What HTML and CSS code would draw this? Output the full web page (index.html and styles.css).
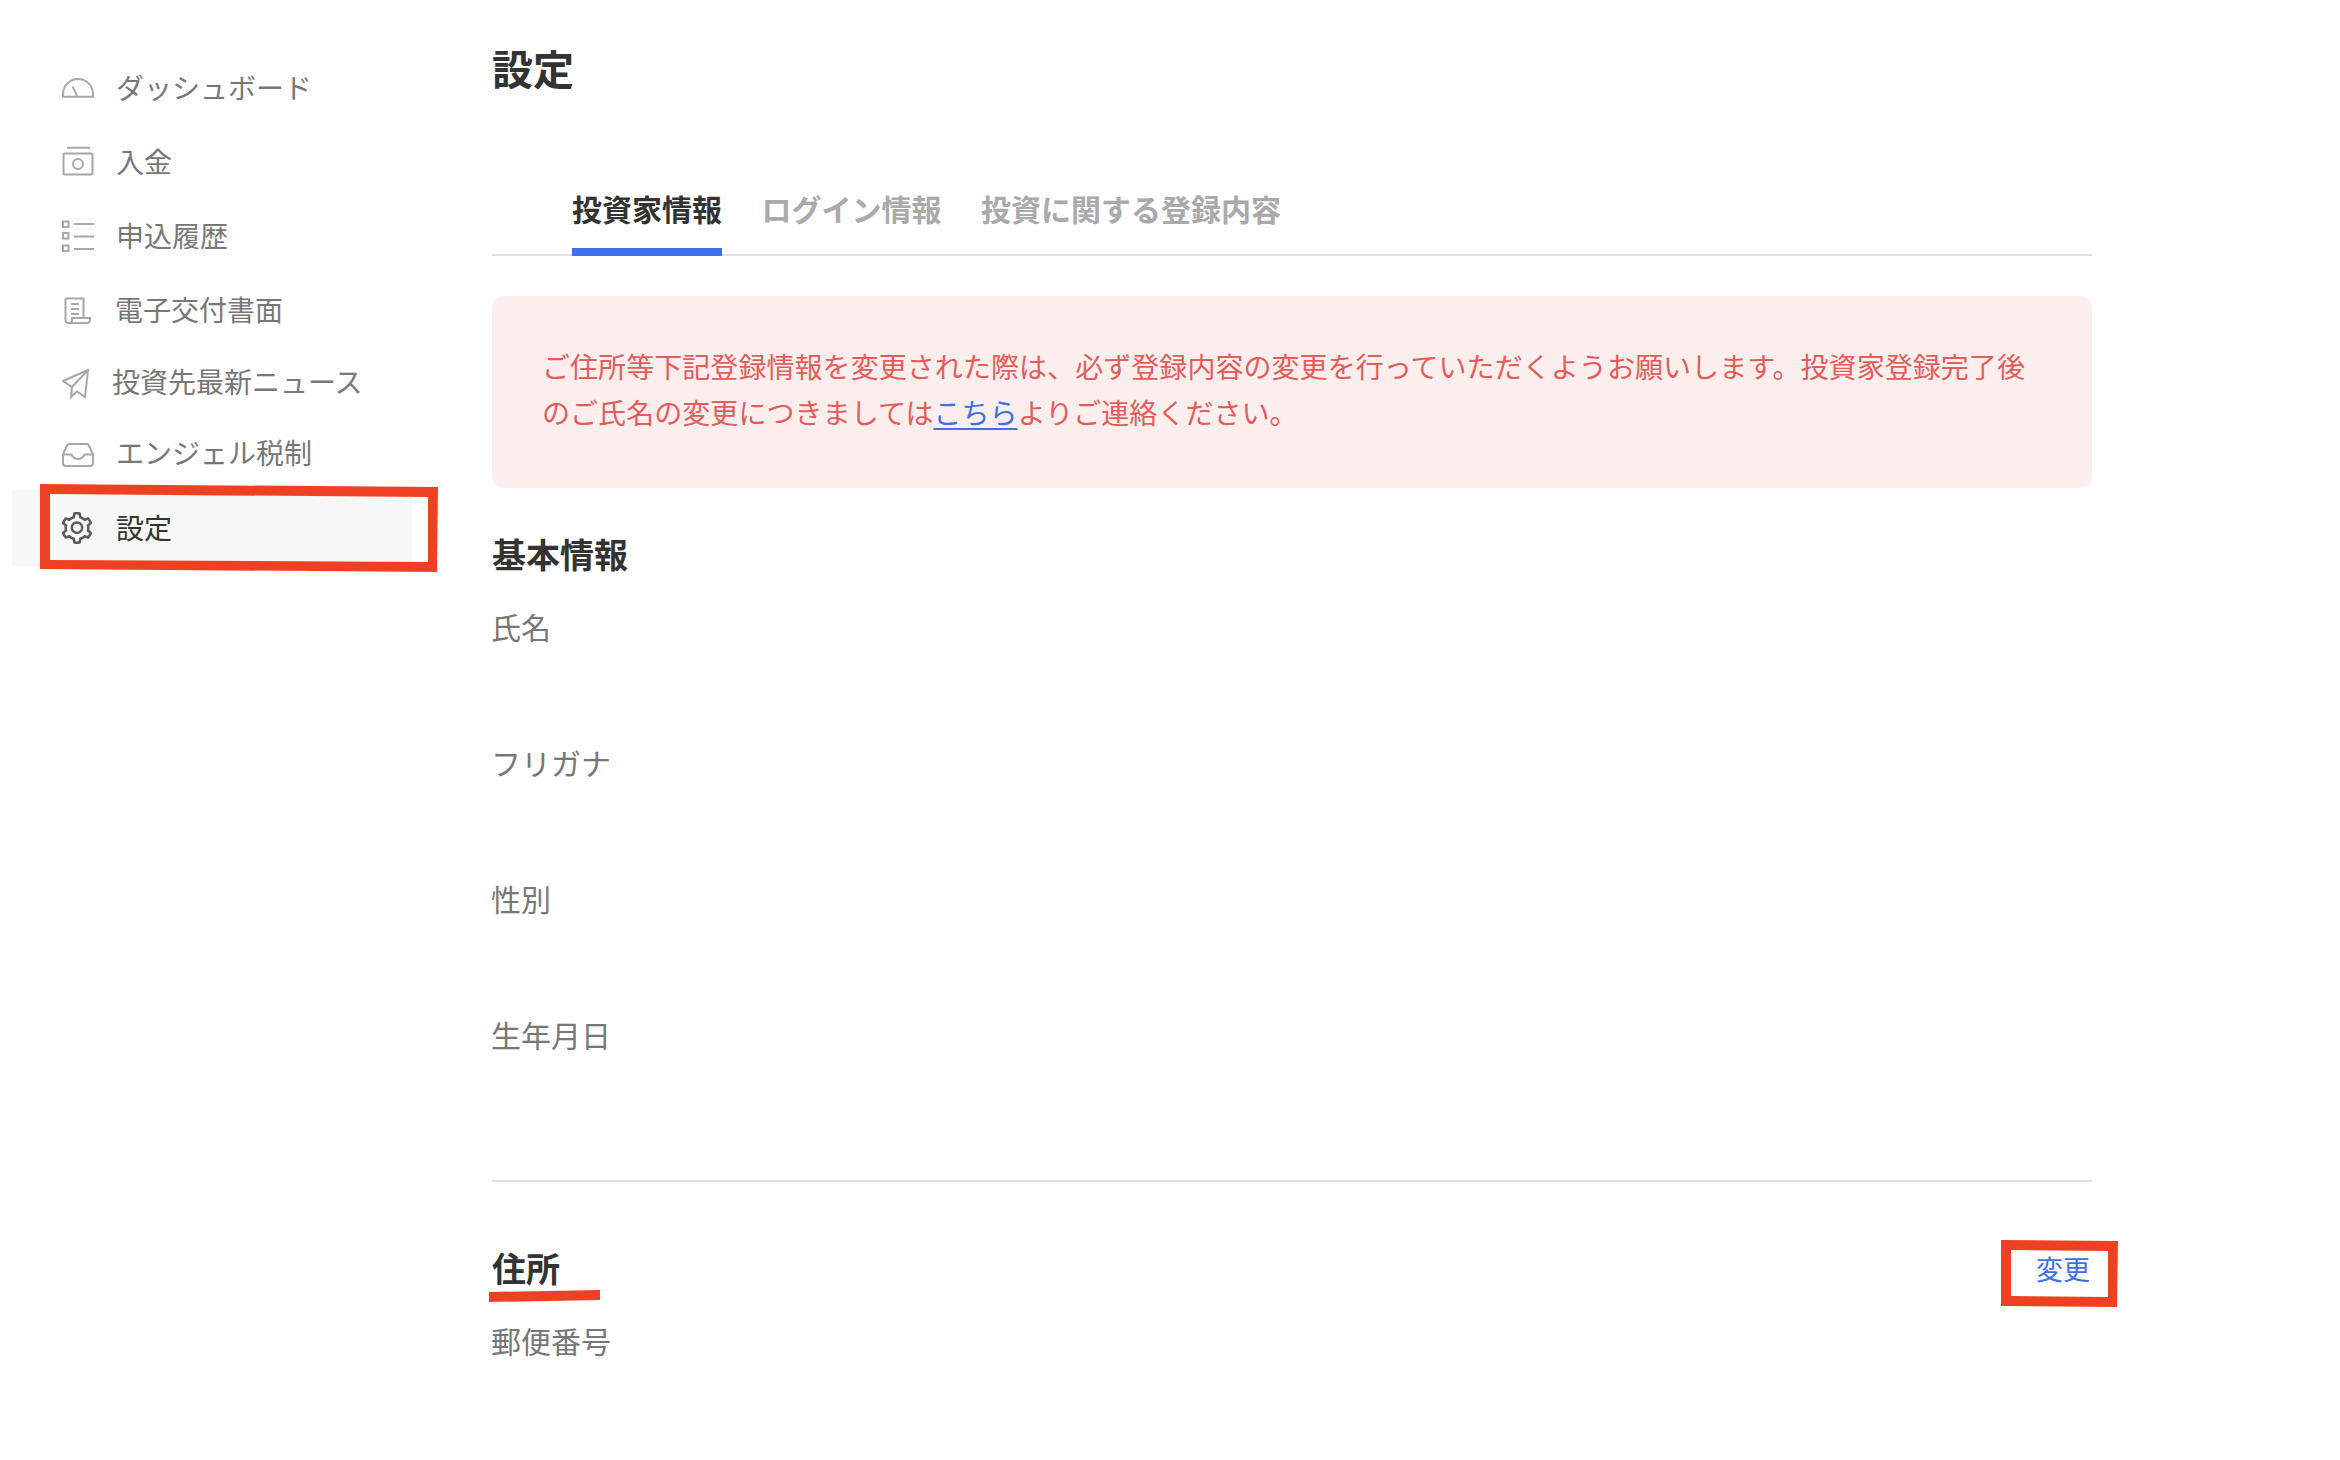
FILE: index.html
```html
<!DOCTYPE html>
<html lang="ja">
<head>
<meta charset="utf-8">
<title>設定</title>
<link rel="stylesheet" href="styles.css">
</head>
<body>
<div class="page">
  <nav class="side">
    <a class="nav-item">
      <svg class="icon" viewBox="0 0 32 32"><path d="M1 24.7v-2.2C1 13.5 7.5 7 16 7s15 6.500 15 15.500v2.200zM10.700 14.700 15.300 24.500"/></svg>
      <span>ダッシュボード</span>
    </a>
    <a class="nav-item">
      <svg class="icon" viewBox="0 0 32 32"><path d="M5 1.700H28M2.500 7.500H29.500a1 1 0 0 1 1 1V27.500a1 1 0 0 1-1 1H2.500a1 1 0 0 1-1-1V8.500a1 1 0 0 1 1-1z"/><circle cx="16" cy="18" r="5"/></svg>
      <span>入金</span>
    </a>
    <a class="nav-item">
      <svg class="icon" viewBox="0 0 32 32"><path d="M1 1.500H6.500V7H1zM1 13H6.500V18.500H1zM1 25.500H6.500V31H1zM12 4H32M12 16.500H32M12 29H32"/></svg>
      <span>申込履歴</span>
    </a>
    <a class="nav-item nav-doc">
      <svg class="icon" viewBox="0 0 32 32"><path d="M3.500 4.500H21.500V24M3.500 4.500V26a3 3 0 0 0 3 3H25a3 3 0 0 0 3-3V24H10V26a3 3 0 0 1-3 3M9 10H17M9 15H17M9 20H17"/></svg>
      <span>電子交付書面</span>
    </a>
    <a class="nav-item nav-short nav-send">
      <svg class="icon" viewBox="0 0 32 32"><path d="M26 3 1 14 10 20 9 30 15 24.500 23 30zM26 3 10 20"/></svg>
      <span>投資先最新ニュース</span>
    </a>
    <a class="nav-item nav-short">
      <svg class="icon" viewBox="0 0 32 32"><path d="M1 16.500 5 7.500A2.500 2.500 0 0 1 7 6H25a2.500 2.500 0 0 1 2 1.500L31 16.500V25a3 3 0 0 1-3 3H4a3 3 0 0 1-3-3zM1 16.500H9.500C11 20 13 21 16 21S21 20 22.500 16.500H31"/></svg>
      <span>エンジェル税制</span>
    </a>
    <a class="nav-item nav-active">
      <svg class="icon icon-gear" viewBox="64 64 896 896"><path d="M924.8 625.700l-65.500-56c3.100-19 4.700-38.400 4.700-57.800s-1.600-38.800-4.700-57.800l65.500-56a32.030 32.030 0 0 0 9.300-35.200l-.9-2.600a443.740 443.740 0 0 0-79.700-137.900l-1.800-2.100a32.120 32.120 0 0 0-35.100-9.500l-81.300 28.900c-30-24.600-63.500-44-99.700-57.600l-15.700-85a32.050 32.050 0 0 0-25.800-25.700l-2.700-.5c-52.100-9.400-106.900-9.400-159 0l-2.700.5a32.050 32.050 0 0 0-25.800 25.700l-15.800 85.400a351.860 351.860 0 0 0-99 57.400l-81.900-29.100a32 32 0 0 0-35.100 9.500l-1.800 2.100a446.020 446.020 0 0 0-79.700 137.900l-.9 2.600c-4.500 12.500-.8 26.500 9.300 35.200l66.300 56.600c-3.100 18.800-4.600 38-4.600 57.100 0 19.200 1.500 38.400 4.600 57.100L99 625.500a32.030 32.030 0 0 0-9.300 35.200l.9 2.600c18.100 50.400 44.900 96.900 79.700 137.900l1.800 2.100a32.120 32.120 0 0 0 35.100 9.500l81.900-29.100c29.800 24.500 63.100 43.900 99 57.400l15.800 85.400a32.050 32.050 0 0 0 25.800 25.700l2.700.5a449.400 449.400 0 0 0 159 0l2.700-.5a32.050 32.050 0 0 0 25.800-25.700l15.700-85a350 350 0 0 0 99.700-57.600l81.300 28.900a32 32 0 0 0 35.100-9.500l1.800-2.100c34.800-41.100 61.600-87.500 79.700-137.900l.9-2.600c4.500-12.300.8-26.300-9.300-35zM788.300 465.900c2.500 15.100 3.800 30.600 3.800 46.100s-1.300 31-3.800 46.100l-6.600 40.100 74.700 63.900a370.030 370.030 0 0 1-42.600 73.600L721 702.800l-31.400 25.800c-23.900 19.600-50.500 35-79.300 45.800l-38.100 14.300-17.900 97a377.500 377.500 0 0 1-85 0l-17.900-97.200-37.800-14.500c-28.500-10.800-55-26.200-78.700-45.700l-31.400-25.900-93.400 33.200c-17-22.900-31.200-47.600-42.600-73.600l75.500-64.500-6.500-40c-2.400-14.900-3.700-30.300-3.700-45.500 0-15.300 1.200-30.600 3.700-45.500l6.500-40-75.500-64.500c11.300-26.100 25.600-50.700 42.600-73.600l93.400 33.200 31.400-25.900c23.700-19.500 50.200-34.900 78.700-45.700l37.900-14.300 17.900-97.200c28.100-3.200 56.800-3.200 85 0l17.900 97 38.100 14.300c28.700 10.800 55.400 26.200 79.300 45.800l31.400 25.800 92.800-32.900c17 22.900 31.200 47.600 42.600 73.600L781.800 426l6.500 39.900zM512 326c-97.200 0-176 78.800-176 176s78.800 176 176 176 176-78.800 176-176-78.800-176-176-176zm79.200 255.200A111.600 111.600 0 0 1 512 614c-29.900 0-58-11.700-79.200-32.800A111.600 111.600 0 0 1 400 502c0-29.900 11.700-58 32.800-79.200C454 401.600 482.100 390 512 390c29.900 0 58 11.600 79.200 32.800A111.600 111.600 0 0 1 624 502c0 29.900-11.700 58-32.800 79.200z"/></svg>
      <span>設定</span>
    </a>
  </nav>

  <main class="main">
    <h1 class="title">設定</h1>
    <div class="tabs">
      <a class="tab tab-active">投資家情報</a>
      <a class="tab">ログイン情報</a>
      <a class="tab">投資に関する登録内容</a>
    </div>
    <p class="alert">ご住所等下記登録情報を変更された際は、必ず登録内容の変更を行っていただくようお願いします。投資家登録完了後のご氏名の変更につきましては<a class="alert-link">こちら</a>よりご連絡ください。</p>

    <section class="section section-basic">
      <div class="section-head"><h2 class="section-title">基本情報</h2></div>
      <div class="field">氏名</div>
      <div class="field">フリガナ</div>
      <div class="field">性別</div>
      <div class="field">生年月日</div>
    </section>

    <section class="section section-address">
      <div class="section-head">
        <h2 class="section-title">住所</h2>
        <a class="change">変更</a>
      </div>
      <div class="field">郵便番号</div>
    </section>
  </main>
</div>

<svg class="marks" viewBox="0 0 2340 1460">
  <path fill-rule="evenodd" d="M40 484 438 487 437 572 40 569ZM50 494 428 497 428 562 50 560Z"/>
  <path d="M489 1292 600 1290 600 1300 489 1302Z"/>
  <path fill-rule="evenodd" d="M2001 1240 2118 1241 2117 1307 2001 1306ZM2011 1250 2108 1251 2108 1297 2011 1296Z"/>
</svg>
</body>
</html>
```
FILE: styles.css
```css
* { box-sizing: border-box; }

html, body {
  margin: 0;
  padding: 0;
  background: #fff;
}

body {
  position: relative;
  width: 2340px;
  height: 1460px;
  overflow: hidden;
  font-family: "Noto Sans CJK JP", "Noto Sans", sans-serif;
  color: #333;
}

.page {
  display: flex;
  align-items: flex-start;
}

/* Sidebar */
.side {
  flex: none;
  width: 492px;
  padding: 51px 0 0 12px;
  display: flex;
  flex-direction: column;
}

.nav-item {
  width: 400px;
  height: 74px;
  padding-left: 50px;
  display: flex;
  align-items: center;
  gap: 22px;
  font-size: 28px;
  color: #777;
  white-space: nowrap;
}

.nav-item span { margin-bottom: 3px; }

.nav-short { height: 71px; }
.nav-doc { gap: 21px; }
.nav-send { gap: 18px; }

.nav-active {
  height: 76px;
  margin-top: 1px;
  background: #f7f7f7;
  color: #333;
}

.icon {
  flex: none;
  width: 32px;
  height: 32px;
  fill: none;
  stroke: #a8a8a8;
  stroke-width: 2;
}

.icon-gear {
  margin-left: -1px;
  margin-right: 1px;
  fill: #5c5c5c;
  stroke: none;
}

/* Main column */
.main {
  flex: none;
  width: 1600px;
  padding-top: 37px;
}

.title {
  margin: 0;
  font-size: 41px;
  line-height: 60px;
  font-weight: 700;
  color: #333;
}

.tabs {
  margin-top: 90px;
  height: 69px;
  padding-left: 80px;
  display: flex;
  gap: 39.500px;
  border-bottom: 2px solid #e2e2e2;
}

.tab {
  height: 69px;
  flex: none;
  font-size: 30px;
  line-height: 43px;
  font-weight: 700;
  color: #aaa;
  border-bottom: 8px solid transparent;
}

.tab-active {
  color: #333;
  border-bottom-color: #4070e6;
}

.alert {
  margin: 40px 0 0;
  padding: 47px 50px 0;
  height: 192px;
  border-radius: 12px;
  background: #fbeeec;
  color: #e55c5c;
  font-size: 28px;
  line-height: 46px;
  letter-spacing: 0.06px;
}

.alert-link {
  color: #4070e6;
  text-decoration: underline;
  text-underline-offset: 4px;
  text-decoration-thickness: 2px;
}

.section-basic {
  margin-top: 42px;
  height: 652px;
  border-bottom: 2px solid #e2e2e2;
}

.section-address { margin-top: 62px; }

.section-head {
  height: 50px;
  display: flex;
  justify-content: space-between;
  align-items: center;
}

.section-title {
  margin: 0 0 2px;
  font-size: 34px;
  line-height: 48px;
  font-weight: 700;
  color: #333;
}

.change {
  margin-right: 2px;
  font-size: 27px;
  line-height: 50px;
  color: #4070e6;
}

.field {
  margin: 0 0 90px -1px;
  height: 46px;
  font-size: 30px;
  line-height: 46px;
  color: #777;
}

.section-head + .field { margin-top: 23px; }

/* Red annotations drawn over the screenshot */
.marks {
  position: absolute;
  left: 0;
  top: 0;
  width: 2340px;
  height: 1460px;
  fill: #ee4124;
  pointer-events: none;
}
```
